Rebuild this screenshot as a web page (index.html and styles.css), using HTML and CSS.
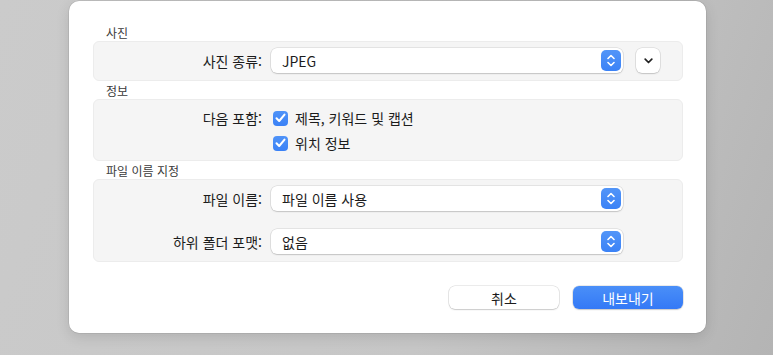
FILE: index.html
```html
<!DOCTYPE html>
<html lang="ko">

<head>
    <meta charset="UTF-8">
    <meta name="viewport" content="width=device-width, initial-scale=1.0">
    <title>내보내기</title>
    <link rel="stylesheet" href="styles.css">
</head>

<body>
    <!-- Export sheet -->
    <div class="sheet">

        <!-- Photo section -->
        <h3 class="section-title">사진</h3>
        <div class="group group-photo">
            <div class="row">
                <span class="label">사진 종류:</span>
                <div class="popup">
                    <span>JPEG</span>
                    <span class="stepper">
                        <svg width="8" height="13" viewBox="0 0 8 13">
                            <path d="M1 4.5 L4 1.5 L7 4.5 M1 8.5 L4 11.5 L7 8.5" fill="none" stroke="#fff" stroke-width="1.6" stroke-linecap="round" stroke-linejoin="round" />
                        </svg>
                    </span>
                </div>
                <button class="more">
                    <svg width="9" height="6" viewBox="0 0 9 6">
                        <path d="M1.2 1.2 L4.5 4.5 L7.8 1.2" fill="none" stroke="#222" stroke-width="1.7" stroke-linecap="round" stroke-linejoin="round" />
                    </svg>
                </button>
            </div>
        </div>

        <!-- Info section -->
        <h3 class="section-title">정보</h3>
        <div class="group group-info">
            <div class="row check-row">
                <span class="label">다음 포함:</span>
                <span class="checkbox">
                    <svg width="11" height="10" viewBox="0 0 11 10">
                        <path d="M1.5 5.2 L4.2 8 L9.5 1.6" fill="none" stroke="#fff" stroke-width="2" stroke-linecap="round" stroke-linejoin="round" />
                    </svg>
                </span>
                <span class="check-text">제목, 키워드 및 캡션</span>
            </div>
            <div class="row check-row">
                <span class="label"></span>
                <span class="checkbox">
                    <svg width="11" height="10" viewBox="0 0 11 10">
                        <path d="M1.5 5.2 L4.2 8 L9.5 1.6" fill="none" stroke="#fff" stroke-width="2" stroke-linecap="round" stroke-linejoin="round" />
                    </svg>
                </span>
                <span class="check-text">위치 정보</span>
            </div>
        </div>

        <!-- File naming section -->
        <h3 class="section-title">파일 이름 지정</h3>
        <div class="group group-name">
            <div class="row">
                <span class="label">파일 이름:</span>
                <div class="popup">
                    <span>파일 이름 사용</span>
                    <span class="stepper">
                        <svg width="8" height="13" viewBox="0 0 8 13">
                            <path d="M1 4.5 L4 1.5 L7 4.5 M1 8.5 L4 11.5 L7 8.5" fill="none" stroke="#fff" stroke-width="1.6" stroke-linecap="round" stroke-linejoin="round" />
                        </svg>
                    </span>
                </div>
            </div>
            <div class="row">
                <span class="label">하위 폴더 포맷:</span>
                <div class="popup">
                    <span>없음</span>
                    <span class="stepper">
                        <svg width="8" height="13" viewBox="0 0 8 13">
                            <path d="M1 4.5 L4 1.5 L7 4.5 M1 8.5 L4 11.5 L7 8.5" fill="none" stroke="#fff" stroke-width="1.6" stroke-linecap="round" stroke-linejoin="round" />
                        </svg>
                    </span>
                </div>
            </div>
        </div>

        <!-- Action buttons -->
        <div class="actions">
            <button class="btn">취소</button>
            <button class="btn btn-primary">내보내기</button>
        </div>
    </div>
</body>

</html>
```

FILE: styles.css
```css
/* Page background behind the sheet */
body {
    margin: 0;
    width: 773px;
    height: 355px;
    overflow: hidden;
    background: linear-gradient(110deg, #cbcbcb 0%, #c6c6c6 60%, #b4b4b4 100%);
    font-family: "Noto Sans CJK KR", "Noto Sans", sans-serif;
    font-size: 14px;
    color: #1c1c1c;
}

/* The white dialog sheet */
.sheet {
    box-sizing: border-box;
    width: 637px;
    height: 332px;
    margin: 1px 0 0 69px;
    padding: 23px 23px 0 24px;
    background-color: #ffffff;
    border-radius: 10px;
    box-shadow: 0 0 0 0.5px rgba(0, 0, 0, 0.12), 0 4px 14px rgba(0, 0, 0, 0.12);
}

/* Small grey section headings */
.section-title {
    margin: 0;
    padding-left: 13px;
    height: 17px;
    line-height: 17px;
    font-size: 12px;
    font-weight: normal;
    color: #3a3a3a;
}

/* Light grey grouped box */
.group {
    background-color: #f5f5f5;
    border: 1px solid #ececec;
    border-radius: 6px;
    display: flex;
    flex-direction: column;
    margin-bottom: 1px;
}

.group-photo {
    padding: 6px 0 7px;
}

.group-info {
    padding: 7px 0 6px;
    gap: 3px;
}

.group-name {
    padding: 6px 0 7px;
    gap: 18px;
}

.row {
    display: flex;
    align-items: center;
    height: 25px;
}

.check-row {
    height: 22px;
}

/* Right aligned form labels */
.label {
    width: 168px;
    flex: none;
    text-align: right;
    margin-right: 9px;
}

/* Pop-up menu field */
.popup {
    box-sizing: border-box;
    width: 352px;
    height: 25px;
    display: flex;
    align-items: center;
    justify-content: space-between;
    padding: 0 2px 0 11px;
    background-color: #ffffff;
    border-radius: 6px;
    box-shadow: 0 0 0 0.5px rgba(0, 0, 0, 0.14), 0 1px 1.5px rgba(0, 0, 0, 0.14);
}

.stepper {
    width: 20px;
    height: 21px;
    border-radius: 5px;
    background: linear-gradient(#5295f8, #3b82f6);
    display: flex;
    align-items: center;
    justify-content: center;
}

/* Small disclosure button */
.more {
    width: 24px;
    height: 25px;
    margin-left: 13px;
    padding: 0;
    border: none;
    border-radius: 6px;
    background-color: #ffffff;
    box-shadow: 0 0 0 0.5px rgba(0, 0, 0, 0.14), 0 1px 1.5px rgba(0, 0, 0, 0.14);
    display: flex;
    align-items: center;
    justify-content: center;
}

/* Checkbox */
.checkbox {
    width: 15px;
    height: 15px;
    margin-left: 2px;
    border-radius: 4px;
    background: linear-gradient(#4f93f8, #3a81f6);
    display: flex;
    align-items: center;
    justify-content: center;
}

.check-text {
    margin-left: 7px;
}

/* Bottom buttons */
.actions {
    display: flex;
    justify-content: flex-end;
    gap: 14px;
    margin-top: 24px;
}

.btn {
    width: 110px;
    height: 23px;
    padding: 0;
    border: none;
    border-radius: 6px;
    background-color: #ffffff;
    box-shadow: 0 0 0 0.5px rgba(0, 0, 0, 0.16), 0 1px 1.5px rgba(0, 0, 0, 0.14);
    font-family: "Noto Sans CJK KR", "Noto Sans", sans-serif;
    font-size: 14px;
    color: #1c1c1c;
}

.btn-primary {
    background: linear-gradient(#4a8ff8, #3479f6);
    color: #ffffff;
}
```
